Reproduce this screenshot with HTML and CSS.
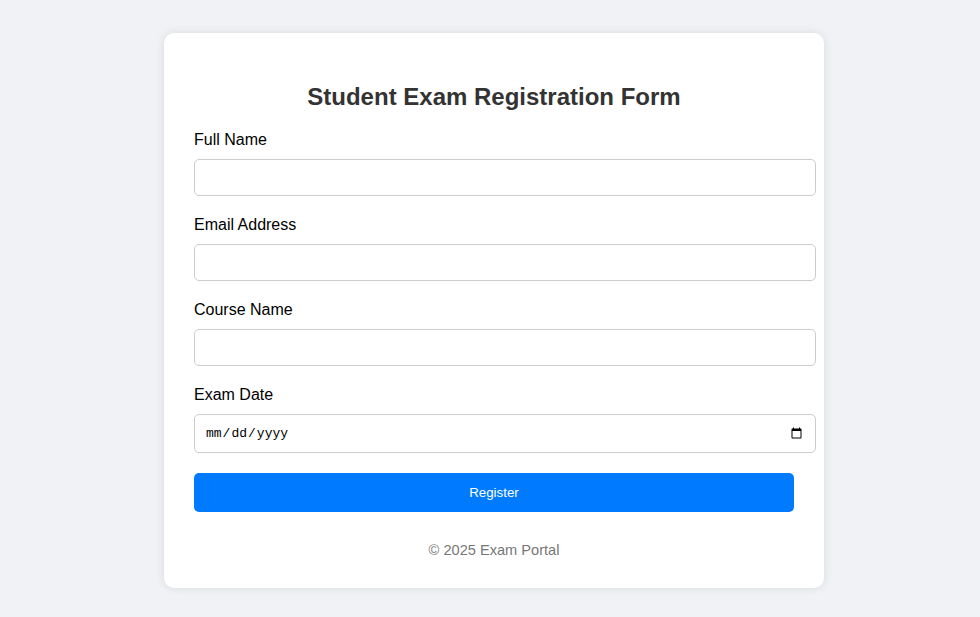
FILE: index.html
```html
<!DOCTYPE html>
<html>
<head>
<meta charset="utf-8">
<title>Student Exam Registration</title>
<link rel="stylesheet" href="styles.css">
</head>
<body>
<div class="card">
  <h2 class="title">Student Exam Registration Form</h2>
  <form class="form">
    <label class="label" for="name">Full Name</label>
    <input class="field" type="text" id="name">
    <label class="label" for="email">Email Address</label>
    <input class="field" type="email" id="email">
    <label class="label" for="course">Course Name</label>
    <input class="field" type="text" id="course">
    <label class="label" for="date">Exam Date</label>
    <input class="field field-date" type="date" id="date">
    <button class="submit" type="button">Register</button>
  </form>
  <p class="footer">&copy; 2025 Exam Portal</p>
</div>
</body>
</html>
```
FILE: styles.css
```css
html, body {
  margin: 0;
}
body {
  background: #f0f2f5;
  font-family: "Liberation Sans", Arial, sans-serif;
  padding: 33px 0 29px 8px;
}
.card {
  width: 600px;
  margin: 0 auto;
  background: #fff;
  padding: 30px;
  border-radius: 10px;
  box-shadow: 0 0 10px rgba(0, 0, 0, 0.1);
}
.title {
  text-align: center;
  color: #333;
  font-size: 24px;
  margin: 20px 0;
}
.label {
  display: block;
  font-size: 16px;
  margin-bottom: 10px;
  color: #000;
}
.field {
  display: block;
  width: 100%;
  padding: 10px;
  border: 1px solid #ccc;
  border-radius: 5px;
  margin: 0 0 20px 0;
  font-size: 13.333px;
}
.field-date {
  font-family: "Liberation Mono", monospace;
  font-size: 13px;
  padding-top: 10px;
  padding-bottom: 10px;
}
.submit {
  display: block;
  width: 100%;
  padding: 12px;
  background: #007bff;
  color: #fff;
  border: none;
  border-radius: 5px;
  font-family: "Liberation Sans", Arial, sans-serif;
  font-size: 13.333px;
  cursor: pointer;
}
.footer {
  text-align: center;
  color: #777;
  font-size: 14.6px;
  margin: 30px 0 0;
}
```
